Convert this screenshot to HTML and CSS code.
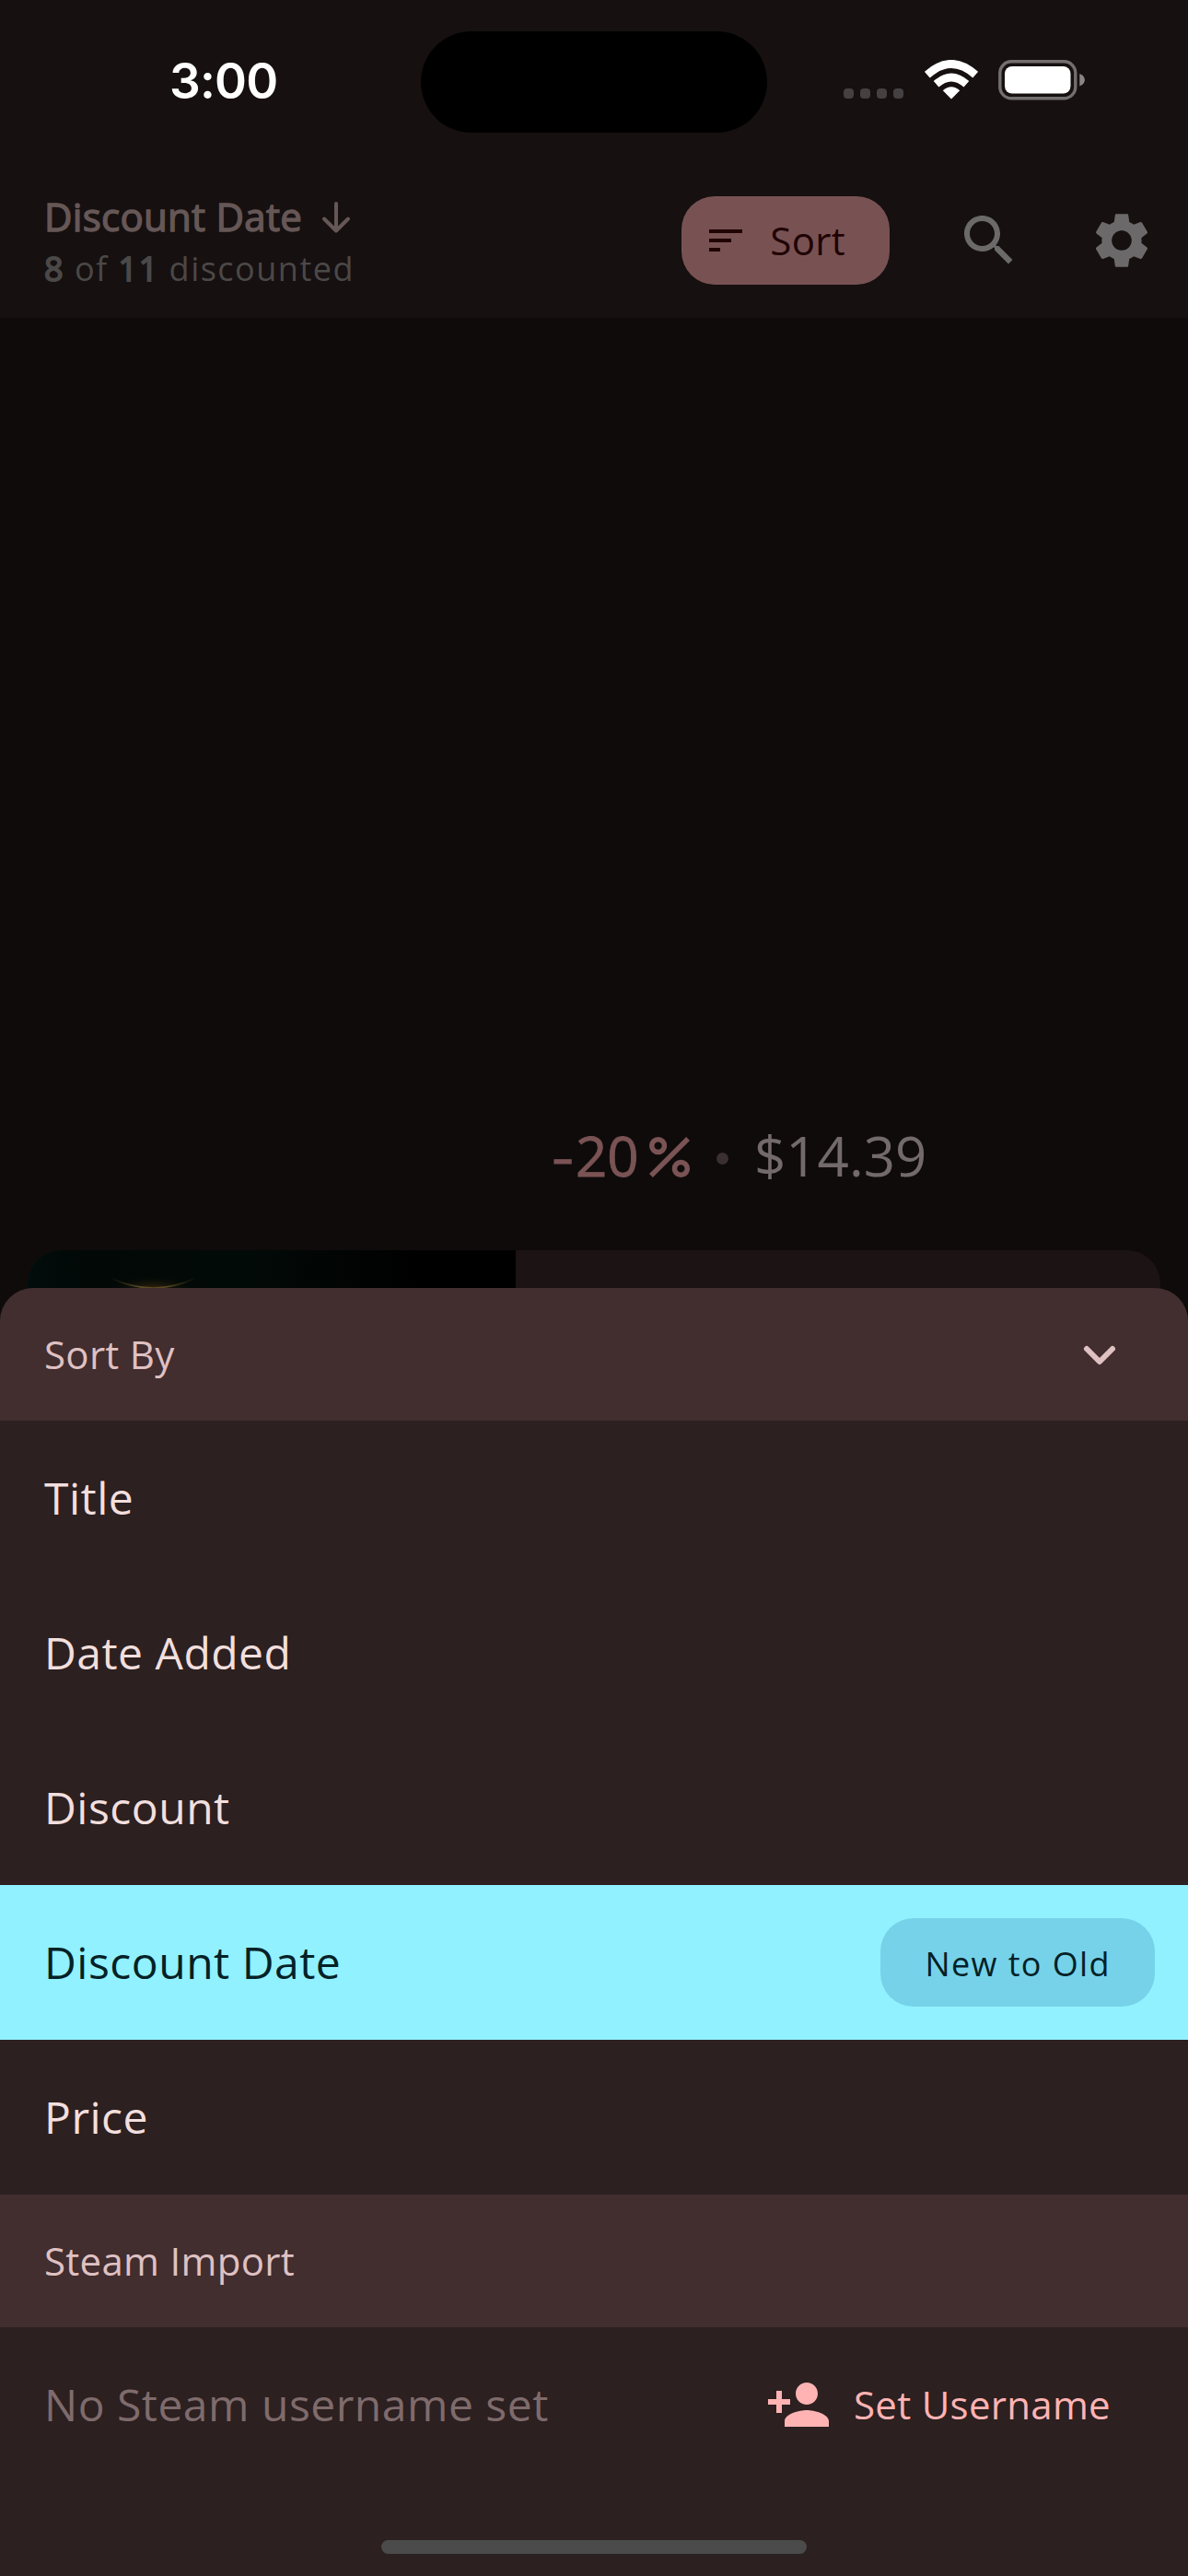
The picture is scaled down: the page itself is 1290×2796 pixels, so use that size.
FILE: index.html
```html
<!DOCTYPE html>
<html lang="en">
<head>
<meta charset="utf-8">
<title>Discounts</title>
<link rel="stylesheet" href="styles.css">
</head>
<body>
<div class="screen">
  <div class="status-bar">
    <div class="clock">3:00</div>
    <div class="island"></div>
    <div class="indicators">
      <div class="signal"><i></i><i></i><i></i><i></i></div>
      <svg class="wifi" width="58" height="43" viewBox="0 0 58 43">
        <path fill="none" stroke="#fff" stroke-width="8.8" d="M2.8 16.2Q29 -7.2 55.2 16.2"/>
        <path fill="none" stroke="#fff" stroke-width="8.6" d="M12.6 26.3Q29 11.6 45.4 26.3"/>
        <path fill="#fff" d="M29 42.4 19.8 33.2Q29 25.2 38.2 33.2Z"/>
      </svg>
      <svg class="battery" width="95" height="44" viewBox="0 0 95 44">
        <rect x="1.8" y="1.8" width="82" height="40" rx="12.5" fill="none" stroke="#746f6f" stroke-width="3.4"/>
        <rect x="7" y="7" width="71.5" height="29.5" rx="8" fill="#fff"/>
        <path d="M88.3 15c3.600 1.300 5.600 4 5.600 6.800s-2 5.500-5.600 6.800z" fill="#8a8787"/>
      </svg>
    </div>
  </div>

  <header class="app-bar">
    <div class="summary">
      <div class="summary-title">
        <span>Discount Date</span>
        <svg width="48" height="48" viewBox="0 0 48 48" fill="none" stroke="#665757" stroke-width="4" stroke-linecap="round" stroke-linejoin="round"><path d="M24 10v28M11 26.500l13 13 13-13"/></svg>
      </div>
      <div class="summary-sub"><b>8</b> of <b>11</b> discounted</div>
    </div>
    <button class="sort-button">
      <svg width="48" height="48" viewBox="0 0 24 24" fill="#200204"><path d="M3 18h6v-2H3v2zM3 6v2h18V6H3zm0 7h12v-2H3v2z"/></svg>
      <span>Sort</span>
    </button>
    <svg width="72" height="72" viewBox="0 0 24 24" fill="#6b6969"><path d="M15.500 14h-.79l-.28-.27C15.410 12.590 16 11.110 16 9.500 16 5.910 13.090 3 9.500 3S3 5.910 3 9.500 5.910 16 9.500 16c1.610 0 3.090-.59 4.230-1.570l.27.28v.79l5 4.990L20.490 19l-4.990-5zm-6 0C7.010 14 5 11.990 5 9.500S7.010 5 9.500 5 14 7.010 14 9.500 11.990 14 9.500 14z"/></svg>
    <svg width="72" height="72" viewBox="0 0 24 24" fill="#6b6969"><path d="M19.140 12.940c.04-.3.06-.61.06-.94 0-.32-.02-.64-.07-.94l2.030-1.580c.18-.14.23-.41.12-.61l-1.920-3.320c-.12-.22-.37-.29-.59-.22l-2.390.96c-.5-.38-1.030-.7-1.620-.94l-.36-2.540c-.04-.24-.24-.41-.48-.41h-3.840c-.24 0-.43.17-.47.41l-.36 2.540c-.59.24-1.130.57-1.620.94l-2.390-.96c-.22-.08-.47 0-.59.22L2.740 8.870c-.12.21-.08.47.12.61l2.030 1.580c-.05.3-.09.63-.09.94s.02.64.07.94l-2.030 1.580c-.18.14-.23.41-.12.61l1.920 3.320c.12.22.37.29.59.22l2.390-.96c.5.38 1.030.7 1.620.94l.36 2.540c.05.24.24.41.48.41h3.840c.24 0 .44-.17.47-.41l.36-2.540c.59-.24 1.130-.56 1.620-.94l2.390.96c.22.08.47 0 .59-.22l1.920-3.320c.12-.22.07-.47-.12-.61l-2.010-1.580zM12 15.600c-1.980 0-3.600-1.620-3.600-3.600s1.620-3.600 3.600-3.600 3.600 1.620 3.600 3.600-1.620 3.600-3.600 3.600z"/></svg>
  </header>

  <main class="games">
    <div class="game-price">
      <span class="discount"><span class="minus">-</span>20</span>
      <svg class="percent" width="66" height="66" viewBox="0 0 24 24"><g fill="none" stroke="#7a5354" stroke-width="2"><circle cx="7.500" cy="7.500" r="2.500"/><circle cx="16.500" cy="16.500" r="2.500"/><path d="M4.710 19.290 19.290 4.710"/></g></svg>
      <span class="dot"></span>
      <span class="price">$14.39</span>
    </div>
    <article class="game-card">
      <svg class="cover" width="530" height="120" viewBox="0 0 530 120">
        <defs>
          <linearGradient id="night" x1="0" x2="1">
            <stop offset="0" stop-color="#010d0c"/><stop offset=".12" stop-color="#020806"/><stop offset=".45" stop-color="#020a08"/><stop offset=".7" stop-color="#010302"/><stop offset=".79" stop-color="#000"/>
          </linearGradient>
          <radialGradient id="glow"><stop offset="0" stop-color="#33240d"/><stop offset="1" stop-color="#0a0f08" stop-opacity="0"/></radialGradient>
          <linearGradient id="rim" x1="0" x2="1"><stop offset="0" stop-color="#473c1c" stop-opacity="0"/><stop offset=".35" stop-color="#5b4d29"/><stop offset=".65" stop-color="#57461f"/><stop offset="1" stop-color="#473c1c" stop-opacity="0"/></linearGradient>
        </defs>
        <rect width="530" height="120" fill="url(#night)"/>
        <ellipse cx="136" cy="41" rx="44" ry="13" fill="url(#glow)"/>
        <path d="M90 30Q136 52 183 30" fill="none" stroke="url(#rim)" stroke-width="1.500"/>
      </svg>
    </article>
  </main>

  <section class="sheet">
    <div class="section-head">
      <span>Sort By</span>
      <svg width="72" height="72" viewBox="0 0 72 72" fill="none" stroke="#dfc1c2" stroke-width="6" stroke-linecap="round" stroke-linejoin="round"><path d="M22 31l14 14 14-14"/></svg>
    </div>
    <div class="option">Title</div>
    <div class="option">Date Added</div>
    <div class="option">Discount</div>
    <div class="option selected"><span>Discount Date</span><button class="order">New to Old</button></div>
    <div class="option">Price</div>
    <div class="section-head">Steam Import</div>
    <div class="option account">
      <span class="muted">No Steam username set</span>
      <button class="set-username">
        <svg width="72" height="72" viewBox="0 0 24 24" fill="#ffb3b3"><path d="M15 12c2.210 0 4-1.790 4-4s-1.790-4-4-4-4 1.790-4 4 1.790 4 4 4zm-9-2V7H4v3H1v2h3v3h2v-3h3v-2H6zm9 4c-2.670 0-8 1.340-8 4v2h16v-2c0-2.660-5.330-4-8-4z"/></svg>
        <span>Set Username</span>
      </button>
    </div>
    <div class="home-indicator"></div>
  </section>
</div>
</body>
</html>
```
FILE: styles.css
```css
* { box-sizing: border-box; }

body {
  margin: 0;
  background: #0f0b0b;
  font-family: "Open Sans", "Noto Sans", sans-serif;
}

button {
  border: 0;
  font: inherit;
  letter-spacing: inherit;
}

svg { display: block; flex: none; }

.screen {
  position: relative;
  display: flex;
  flex-direction: column;
  width: 1290px;
  height: 2796px;
  overflow: hidden;
}

/* Status bar */
.status-bar {
  display: grid;
  grid-template-columns: 457px 376px 457px;
  align-items: start;
  height: 177px;
  padding-top: 34px;
  background: #161010;
}

.clock {
  padding: 22px 0 0 184px;
  font: 600 53px/64px Inter, sans-serif;
  letter-spacing: -0.8px;
  color: #fff;
}

.island {
  height: 110px;
  border-radius: 55px;
  background: #000;
}

.indicators {
  display: flex;
  align-items: flex-start;
  padding: 31px 0 0 83px;
}

.signal {
  display: flex;
  gap: 7px;
  padding-top: 31px;
}

.signal i {
  width: 11px;
  height: 11px;
  border-radius: 4px;
  background: #454041;
}

.wifi { margin-left: 23px; }
.battery { margin-left: 22px; }

/* App bar */
.app-bar {
  display: flex;
  align-items: center;
  gap: 72px;
  height: 168px;
  padding: 0 36px 0 48px;
  background: #161010;
}

.summary { flex: 1; }

.summary-title {
  display: flex;
  align-items: center;
  gap: 13px;
  font-size: 42px;
  line-height: 60px;
  letter-spacing: 0.3px;
  color: #665757;
  -webkit-text-stroke: 1.4px #665757;
}

.summary-sub {
  padding-top: 1px;
  font-size: 36px;
  line-height: 51px;
  letter-spacing: 1.5px;
  color: #4b4848;
}

.summary-sub b {
  font-weight: 400;
  -webkit-text-stroke: 1.8px #4b4848;
}

.sort-button {
  display: flex;
  align-items: center;
  gap: 24px;
  height: 96px;
  padding: 0 48px 0 24px;
  border-radius: 36px;
  background: #785253;
  color: #200204;
  font-size: 42px;
  letter-spacing: 0.3px;
}

.sort-button span { padding-bottom: 2px; }

/* Game list */
.games {
  flex: 1;
  display: flex;
  flex-direction: column;
  padding: 868px 30px 0;
}

.game-price {
  display: flex;
  align-items: center;
  height: 82px;
  margin-bottom: 62px;
  padding-left: 569px;
  font-size: 60px;
  line-height: 82px;
}

.discount {
  width: 95px;
  color: #7a5354;
  -webkit-text-stroke: 0.9px #7a5354;
}

.minus {
  display: inline-block;
  width: 26px;
  transform: scaleX(1.25);
  transform-origin: left;
}

.percent { margin-top: 4px; }

.dot {
  width: 13px;
  height: 13px;
  margin: 6px 28px 0 18px;
  border-radius: 50%;
  background: #3a3031;
}

.price { color: #736a6a; }

.game-card {
  flex: 1;
  border-radius: 36px;
  background: #1c1314;
  overflow: hidden;
}

/* Bottom sheet */
.sheet {
  position: absolute;
  left: 0;
  right: 0;
  bottom: 0;
  height: 1398px;
  border-radius: 36px 36px 0 0;
  background: #2c2020;
  overflow: hidden;
}

.section-head {
  display: flex;
  align-items: center;
  justify-content: space-between;
  height: 144px;
  padding: 0 60px 2px 48px;
  background: #422d2f;
  color: #dfc1c2;
  font-size: 42px;
  letter-spacing: 0.3px;
}

.option {
  display: flex;
  align-items: center;
  justify-content: space-between;
  height: 168px;
  padding: 0 36px 2px 48px;
  color: #f2dfde;
  font-size: 48px;
  letter-spacing: 0.5px;
}

.selected {
  padding-bottom: 0;
  background: #91f1ff;
  color: #052126;
}

.selected span { padding-bottom: 2px; }

.order {
  height: 96px;
  padding: 2px 48px 0;
  border-radius: 36px;
  background: #76d2e9;
  color: #052126;
  font-size: 36px;
  letter-spacing: 1.4px;
}

.account { padding: 0 84px 0 48px; }

.muted { padding-bottom: 2px; color: #7f6b6c; }

.set-username {
  display: flex;
  align-items: center;
  gap: 24px;
  padding: 0;
  background: none;
  color: #ffb3b3;
  font-size: 42px;
  letter-spacing: 0.3px;
}

.set-username span { padding-bottom: 2px; }

.home-indicator {
  width: 462px;
  height: 15px;
  margin: 63px auto 0;
  border-radius: 8px;
  background: #4b4b4b;
}
```
